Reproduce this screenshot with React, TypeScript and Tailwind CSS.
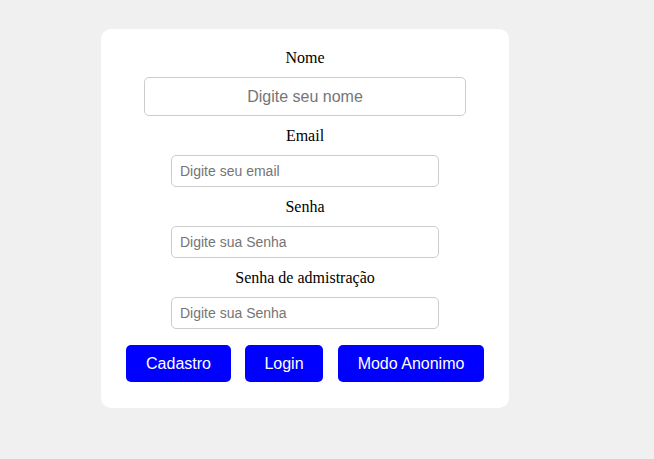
export default function App() {
  const labelCls =
    "text-[16px] leading-[18px] text-black font-['Liberation_Serif','Times_New_Roman',serif]";
  const smallInput =
    "mt-[10px] w-[268px] h-[32px] rounded-[5px] border border-[#cccccc] px-[8px] text-[14px] bg-white outline-none placeholder:text-[#757575] font-['Liberation_Sans',Arial,sans-serif]";
  const btn =
    "h-[37px] rounded-[5px] bg-[#0000ff] text-white text-[16px] font-['Liberation_Sans',Arial,sans-serif]";

  return (
    <div className="min-h-[459px] w-full bg-[#f0f0f0] pt-[29px]">
      <div className="ml-[101px] w-[408px] rounded-[10px] bg-white pt-[20px] pb-[26px] flex flex-col items-center">
        <label className={labelCls}>Nome</label>
        <input
          type="text"
          placeholder="Digite seu nome"
          className="mt-[10px] w-[322px] h-[39px] rounded-[5px] border border-[#cccccc] text-center text-[16px] bg-white outline-none placeholder:text-[#757575] font-['Liberation_Sans',Arial,sans-serif]"
        />

        <label className={`mt-[11px] ${labelCls}`}>Email</label>
        <input type="email" placeholder="Digite seu email" className={smallInput} />

        <label className={`mt-[11px] ${labelCls}`}>Senha</label>
        <input type="password" placeholder="Digite sua Senha" className={smallInput} />

        <label className={`mt-[11px] ${labelCls}`}>Senha de admistração</label>
        <input type="password" placeholder="Digite sua Senha" className={smallInput} />

        <div className="mt-[16px] flex justify-center">
          <button className={`${btn} w-[105px] mr-[14px]`}>Cadastro</button>
          <button className={`${btn} w-[78px] mr-[15px]`}>Login</button>
          <button className={`${btn} w-[146px]`}>Modo Anonimo</button>
        </div>
      </div>
    </div>
  );
}
